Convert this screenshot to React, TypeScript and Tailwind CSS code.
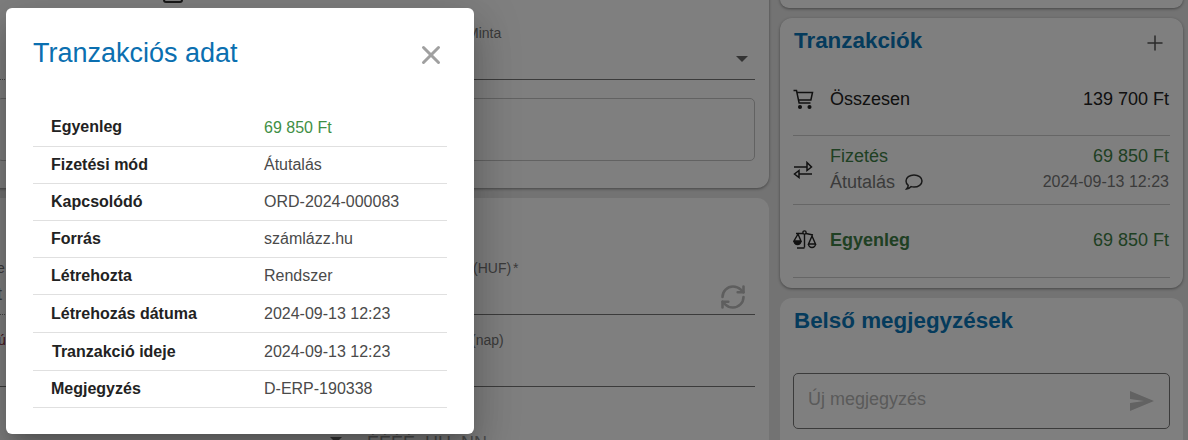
import { Plus, RefreshCw, X } from 'lucide-react'

const details = [
  { label: 'Egyenleg', value: '69 850 Ft', height: 'h-[37px]', valueClass: 'text-[#3f8f45]', labelClass: 'pl-[18px] pb-[2px]' },
  { label: 'Fizetési mód', value: 'Átutalás', height: 'h-[37px]', valueClass: 'text-[#4a4a4a]', labelClass: 'pl-[18px]' },
  { label: 'Kapcsolódó', value: 'ORD-2024-000083', height: 'h-[37px]', valueClass: 'text-[#4a4a4a]', labelClass: 'pl-[18px]' },
  { label: 'Forrás', value: 'számlázz.hu', height: 'h-[37px]', valueClass: 'text-[#4a4a4a]', labelClass: 'pl-[18px]' },
  { label: 'Létrehozta', value: 'Rendszer', height: 'h-[37px]', valueClass: 'text-[#4a4a4a]', labelClass: 'pl-[18px]' },
  { label: 'Létrehozás dátuma', value: '2024-09-13 12:23', height: 'h-[38px]', valueClass: 'text-[#4a4a4a]', labelClass: 'pl-[18px]' },
  { label: 'Tranzakció ideje', value: '2024-09-13 12:23', height: 'h-[38px]', valueClass: 'text-[#4a4a4a]', labelClass: 'pl-[19px]' },
  { label: 'Megjegyzés', value: 'D-ERP-190338', height: 'h-[37px]', valueClass: 'text-[#4a4a4a]', labelClass: 'pl-[18px]' },
]

function CartIcon() {
  return (
    <svg width="21" height="21" viewBox="0 0 21 21" fill="none" stroke="#222" strokeWidth="1.5">
      <path d="M0.5 1.5h3l2.6 12.5h11.4" />
      <path d="M4 3.5h15.5l-1.6 7.5H5.5" />
      <circle cx="7" cy="18" r="1.3" fill="#222" />
      <circle cx="16.5" cy="18" r="1.3" fill="#222" />
    </svg>
  )
}

function TransferIcon() {
  return (
    <svg width="20" height="18" viewBox="0 0 20 18" fill="none" stroke="#222" strokeWidth="1.5">
      <path d="M1 6h13" />
      <path d="M14 1.5l4.5 4.5-4.5 3.5z" />
      <path d="M19 13H6" />
      <path d="M6 9.5L1.5 13 6 16.5z" />
    </svg>
  )
}

function ScaleIcon() {
  return (
    <svg width="24" height="20" viewBox="0 0 24 20" fill="none" stroke="#222" strokeWidth="1.4">
      <circle cx="11.5" cy="2.5" r="1.6" />
      <path d="M3 3.5h7M13 3.500l7 1.500M11.500 4v13.500M4 18h7.500" />
      <path d="M5 4L1 11h7z" />
      <path d="M1 11a3.500 3.500 0 0 0 7 0" fill="#222" />
      <path d="M19 6l-3.500 8h7z" />
      <path d="M15.500 14a3.500 3.500 0 0 0 7 0" />
    </svg>
  )
}

function CommentIcon() {
  return (
    <svg width="18" height="16" viewBox="0 0 18 16" fill="none" stroke="#333" strokeWidth="1.5">
      <path d="M9 1c4.400 0 8 2.500 8 6s-3.600 6-8 6c-1 0-2-.1-2.800-.4C5 14 3.500 15 1.500 15c1-1 1.700-2.300 1.700-3.600C1.800 10.200 1 8.700 1 7c0-3.500 3.600-6 8-6z" />
    </svg>
  )
}

function SendIcon() {
  return (
    <svg width="24" height="20" viewBox="0 0 24 20" fill="#c4c4c4">
      <path d="M0 20V12l14-2L0 8V0l24 10z" />
    </svg>
  )
}

function CaretIcon() {
  return (
    <svg width="12" height="6" viewBox="0 0 12 6" fill="#666">
      <path d="M0 0h12L6 6z" />
    </svg>
  )
}

function Field({ label, labelClass, children, border }: { label?: React.ReactNode; labelClass?: string; children?: React.ReactNode; border: string }) {
  return (
    <div className="flex flex-col">
      <div className={`h-[14px] text-[14px] leading-[14px] whitespace-nowrap ${labelClass}`}>{label}</div>
      <div className={`h-[40px] flex items-center justify-between border-b ${border}`}>{children}</div>
    </div>
  )
}

export default function App() {
  return (
    <div className="relative w-[1188px] h-[440px] overflow-hidden bg-[#e6e6e6] font-['Liberation_Sans',Arial,sans-serif]">
      <div className="flex gap-[11px]">
        {/* Page behind the dialog */}
        <div className="w-[785px] -ml-4 -mt-[17px] flex flex-col gap-[10px] shrink-0">
          <section className="bg-white rounded-xl shadow-[0_1px_3px_rgba(0,0,0,0.4)] pl-[13px] pr-[14px] h-[205px]">
            <div className="h-[20px] flex items-end overflow-hidden text-[16px] leading-[20px] text-[#333]">
              <div className="ml-[166px] w-[20px] h-[20px] border-2 border-[#333] rounded-[3px]" />
              <span className="ml-[61px] translate-y-[-1px]">y</span>
              <span className="ml-[120px] translate-y-[-1px]">g</span>
            </div>
            <div className="grid grid-cols-[350px_388px] gap-x-5 mt-[23px]">
              <Field border="border-dotted border-[#888]" />
              <Field label="Minta" labelClass="pl-[100px] text-[#777]" border="border-[#777]">
                <span />
                <span className="mr-[7px] mb-[2px]">
                  <CaretIcon />
                </span>
              </Field>
            </div>
            <div className="h-[63px] mt-[18px] border border-[#c4c4c4] rounded-[5px]" />
          </section>

          <section className="bg-white rounded-xl pl-[13px] pr-[14px] pt-[63px] h-[300px]">
            <div className="grid grid-cols-[350px_388px] gap-x-5 gap-y-[18px]">
              <Field label="e" labelClass="text-[#777]" border="border-dotted border-[#888]">
                <span className="text-[18px] text-[#777]">t</span>
              </Field>
              <Field
                label={
                  <>
                    (HUF)<span className="ml-[2px]">*</span>
                  </>
                }
                labelClass="pl-[106px] text-[#777]"
                border="border-[#777]"
              >
                <span />
                <RefreshCw size={28} strokeWidth={2.2} className="mr-[8px] mt-[5px] text-[#bcbcbc]" />
              </Field>
              <Field label="ú" labelClass="pl-[1px] text-[#8a2a3a]" border="border-[#777]" />
              <Field label="(nap)" labelClass="pl-[104px] text-[#777]" border="border-[#777]" />
              <div className="flex justify-end items-start pt-[32px] pr-[5px]">
                <CaretIcon />
              </div>
              <div className="text-[18px] leading-[20px] pt-[28px] text-[#999]">ÉÉÉÉ. HH. NN</div>
            </div>
          </section>
        </div>

        <div className="w-[403px] -mt-[10px] flex flex-col gap-[10px] shrink-0">
          <section className="bg-white rounded-xl h-[18px] shadow-[0_1px_3px_rgba(0,0,0,0.4)]" />
          <section className="bg-white rounded-xl shadow-[0_1px_3px_rgba(0,0,0,0.4)] h-[270px] px-[13px]">
            <div className="h-[46px] pl-[1px] flex items-center justify-between">
              <h2 className="text-[22.4px] font-bold text-[#0a76b8]">Tranzakciók</h2>
              <Plus size={24} strokeWidth={1.5} className="text-[#555] mr-[3px] mt-[4px]" />
            </div>
            <div className="h-[72px] flex items-center border-b border-[#ccc] text-[18px]">
              <div className="w-[37px]">
                <CartIcon />
              </div>
              <span className="text-[#222]">Összesen</span>
              <span className="ml-auto mr-[1px] text-[#222]">139 700 Ft</span>
            </div>
            <div className="h-[69px] flex items-center border-b border-[#ccc]">
              <div className="w-[37px]">
                <TransferIcon />
              </div>
              <div className="flex-1 pb-[2px] pr-[1px]">
                <div className="flex justify-between text-[18px] leading-[26px] text-[#3f8046]">
                  <span>Fizetés</span>
                  <span>69 850 Ft</span>
                </div>
                <div className="flex justify-between items-center leading-[26px] text-[#777]">
                  <span className="flex items-center gap-[10px] text-[18px]">
                    Átutalás
                    <CommentIcon />
                  </span>
                  <span className="text-[16px]">2024-09-13 12:23</span>
                </div>
              </div>
            </div>
            <div className="h-[73px] flex items-center border-b border-[#ccc] text-[18px]">
              <div className="w-[37px] pb-[2px]">
                <ScaleIcon />
              </div>
              <span className="font-bold text-[#3f8046] pb-[2px]">Egyenleg</span>
              <span className="ml-auto mr-[1px] text-[#3f8046] pb-[2px]">69 850 Ft</span>
            </div>
          </section>
          <section className="bg-white rounded-xl h-[200px] px-[13px]">
            <h2 className="h-[46px] pl-[1px] flex items-center text-[22.4px] font-bold text-[#0a76b8]">Belső megjegyzések</h2>
            <div className="mt-[29px] h-[56px] border border-[#777] rounded-[5px] pl-[14px] pr-[15px] flex items-center justify-between">
              <span className="text-[18px] text-[#b5b5b5] pb-[3px]">Új megjegyzés</span>
              <SendIcon />
            </div>
          </section>
        </div>
      </div>

      {/* Backdrop */}
      <div className="absolute inset-0 bg-black/50" />

      {/* Dialog */}
      <div className="absolute left-[6px] top-[8px] w-[468px] h-[426px] bg-white rounded-[6px] shadow-[0_11px_15px_-7px_rgba(0,0,0,0.2),0_24px_38px_3px_rgba(0,0,0,0.14),0_9px_46px_8px_rgba(0,0,0,0.12)] px-[27px]">
        <div className="h-[102px] pt-[28px] flex justify-between items-start">
          <h1 className="text-[27px] leading-[34px] text-[#0b6fb0]">Tranzakciós adat</h1>
          <X size={30} strokeWidth={2.4} className="text-[#a0a0a0] mt-[4px] mr-[1px]" />
        </div>
        {details.map((row) => (
          <div key={row.label} className={`${row.height} grid grid-cols-[231px_1fr] items-center border-b border-[#e0e0e0] text-[16px]`}>
            <div className={`${row.labelClass} font-bold text-[#222]`}>{row.label}</div>
            <div className={row.valueClass}>{row.value}</div>
          </div>
        ))}
      </div>
    </div>
  )
}
